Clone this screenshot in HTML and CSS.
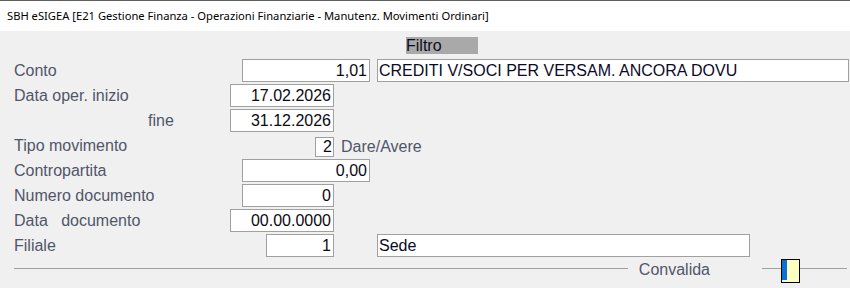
FILE: index.html
```html
<!DOCTYPE html>
<html lang="it">
<head>
    <meta charset="UTF-8">
    <title>SBH eSIGEA</title>
    <link rel="stylesheet" href="styles.css">
</head>
<body>
    <div class="window">
        <div class="titlebar">SBH eSIGEA [E21 Gestione Finanza - Operazioni Finanziarie - Manutenz. Movimenti Ordinari]</div>
        <div class="content">
            <div class="head-row"><span class="filtro">Filtro</span></div>
            <div class="form">
                <div class="label">Conto</div>
                <div class="cell"><div class="box w-conto">1,01</div></div>
                <div class="cell-desc"><div class="box text w-desc">CREDITI V/SOCI PER VERSAM. ANCORA DOVU</div></div>

                <div class="label">Data oper. inizio</div>
                <div class="cell short"><div class="box w-data">17.02.2026</div></div>
                <div></div>

                <div class="label sub">fine</div>
                <div class="cell short"><div class="box w-data">31.12.2026</div></div>
                <div></div>

                <div class="label">Tipo movimento</div>
                <div class="cell-tipo"><div class="box small">2</div><span class="hint">Dare/Avere</span></div>

                <div class="label">Contropartita</div>
                <div class="cell"><div class="box w-conto">0,00</div></div>
                <div></div>

                <div class="label">Numero documento</div>
                <div class="cell short"><div class="box w-num">0</div></div>
                <div></div>

                <div class="label">Data&nbsp;&nbsp;&nbsp;documento</div>
                <div class="cell short"><div class="box w-data">00.00.0000</div></div>
                <div></div>

                <div class="label">Filiale</div>
                <div class="cell short"><div class="box w-fil">1</div></div>
                <div class="cell-desc"><div class="box text w-sede">Sede</div></div>
            </div>
            <div class="footer">
                <div class="line grow"></div>
                <span class="convalida">Convalida</span>
                <div class="line seg-a"></div>
                <div class="check"><div class="check-fill"></div></div>
                <div class="line seg-b"></div>
            </div>
        </div>
    </div>
</body>
</html>
```

FILE: styles.css
```css
* {
    margin: 0;
    padding: 0;
    box-sizing: border-box;
}
body {
    width: 850px;
    height: 288px;
    background-color: #f0f0f0;
    font-family: "Liberation Sans", Arial, sans-serif;
    font-size: 16px;
    overflow: hidden;
}
.window {
    border-top: 1px solid #5f5f5f;
}
.titlebar {
    height: 30px;
    background-color: #fff;
    color: #000;
    font-family: "Noto Sans", "Open Sans", sans-serif;
    font-size: 11.2px;
    line-height: 30px;
    padding-left: 7px;
}
.content {
    padding-top: 6px;
}
.head-row {
    height: 17px;
    padding-left: 406px;
    margin-bottom: 5px;
}
.filtro {
    display: inline-block;
    width: 72px;
    height: 17px;
    line-height: 17px;
    background-color: #a9a9a9;
    color: #0c0c1e;
}
.form {
    display: grid;
    grid-template-columns: 209px 140px 472px;
    grid-auto-rows: 23px;
    column-gap: 7px;
    row-gap: 2px;
    padding-left: 14px;
}
.label {
    color: #50566a;
    line-height: 23px;
    white-space: nowrap;
}
.label.sub {
    padding-left: 134px;
}
.cell {
    display: flex;
    justify-content: flex-end;
}
.cell.short {
    padding-right: 36px;
}
.cell-desc {
    display: flex;
}
.cell-tipo {
    grid-column: 2 / 4;
    display: flex;
    align-items: flex-start;
    padding-left: 85px;
}
.box {
    height: 23px;
    border: 1px solid #a0a0a0;
    background-color: #fff;
    color: #0a0a14;
    line-height: 21px;
    text-align: right;
    padding-right: 2px;
    white-space: nowrap;
    overflow: hidden;
}
.box.text {
    text-align: left;
    padding-left: 1px;
    color: #0a0a28;
}
.w-conto {
    width: 128px;
}
.w-data {
    width: 104px;
}
.w-num {
    width: 92px;
}
.w-fil {
    width: 68px;
}
.w-desc {
    width: 472px;
}
.w-sede {
    width: 373px;
}
.box.small {
    width: 19px;
    height: 20px;
    line-height: 18px;
    margin-top: 3px;
    padding-right: 1px;
}
.hint {
    margin-left: 7px;
    color: #50566a;
    line-height: 23px;
    margin-top: 1px;
}
.footer {
    display: flex;
    align-items: flex-start;
    margin-top: 2px;
    padding-left: 14px;
    padding-right: 3px;
}
.line {
    height: 1px;
    margin-top: 9px;
    background-color: #a0a0a0;
}
.grow {
    flex: 1;
}
.convalida {
    margin: 2px 52px 0 11px;
    line-height: 18px;
    color: #50566a;
}
.seg-a {
    width: 19px;
}
.seg-b {
    width: 47px;
}
.check {
    width: 19px;
    height: 24px;
    border: 1px solid #000;
    background-color: #ffffc4;
    padding: 0 0 2px 0;
}
.check-fill {
    width: 5px;
    height: 100%;
    background-color: #0b6fd3;
}
```
